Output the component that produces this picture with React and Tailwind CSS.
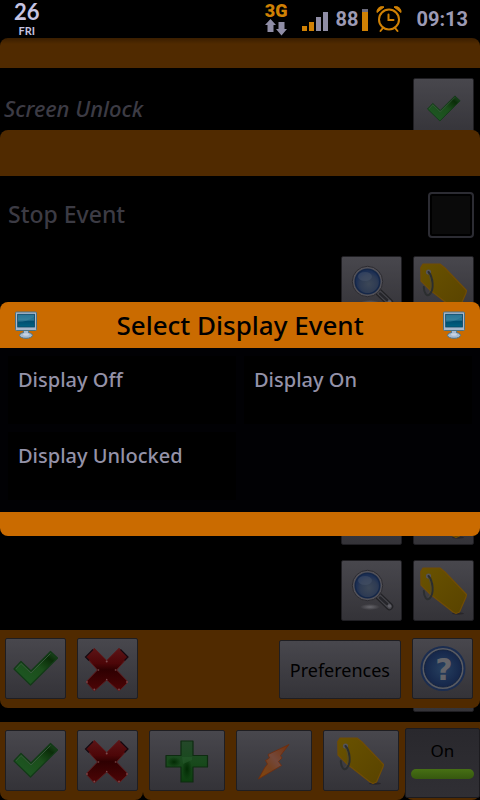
import { useState } from "react";
import clsx from "clsx";

const CheckIcon = ({ className = "size-12" }) => (
  <svg viewBox="0 0 48 48" className={className} aria-hidden="true">
    <defs>
      <linearGradient id="check" x1="0" y1="1" x2="1" y2="0">
        <stop offset="0" stopColor="#1f5a26" />
        <stop offset="0.55" stopColor="#1b4e1b" />
        <stop offset="0.8" stopColor="#0a2d08" />
        <stop offset="1" stopColor="#24502a" />
      </linearGradient>
    </defs>
    <path
      d="M2 24 9 16.5 19 26 38.5 6.5 45.5 13 18.5 40Z"
      fill="url(#check)"
      stroke="#123a17"
      strokeWidth="1.2"
      strokeLinejoin="round"
    />
    <path d="M4 24 9 18.5 19 28 38.5 8.5" fill="none" stroke="#37573b" strokeWidth="1" />
  </svg>
);

const CrossIcon = () => (
  <svg viewBox="0 0 48 48" className="size-12" aria-hidden="true">
    <defs>
      <linearGradient id="cross" x1="0" y1="0" x2="0" y2="1">
        <stop offset="0" stopColor="#5c1416" />
        <stop offset="0.35" stopColor="#4d0608" />
        <stop offset="0.5" stopColor="#2e0001" />
        <stop offset="1" stopColor="#4e0506" />
      </linearGradient>
    </defs>
    <path
      d="M10.3 3.3 2 12 13.5 25 2 37 10.3 46 22.7 35 35 46 44 37 32.5 25 44 12 35 3.3 22.7 15.5Z"
      fill="url(#cross)"
      stroke="#5b191b"
      strokeWidth="1"
      strokeLinejoin="round"
    />
    <path
      d="M9 4.5 1.5 12 5 15.5M36.5 4.5 44 12 40.5 15.5"
      fill="none"
      stroke="#150810"
      strokeWidth="1.2"
    />
    <g fill="#7c4a4d">
      <circle cx="22.7" cy="16.5" r="1" />
      <circle cx="14.5" cy="25" r="0.8" />
      <circle cx="31.5" cy="25" r="0.8" />
      <circle cx="22.7" cy="34.5" r="0.8" />
      <circle cx="10.3" cy="44.5" r="0.9" />
      <circle cx="35" cy="44.5" r="0.9" />
      <circle cx="3" cy="37" r="0.9" />
      <circle cx="43" cy="37" r="0.9" />
    </g>
  </svg>
);

const PlusIcon = () => (
  <svg viewBox="0 0 48 48" className="size-12" aria-hidden="true">
    <defs>
      <linearGradient id="plus" x1="0" y1="0" x2="0" y2="1">
        <stop offset="0" stopColor="#24482a" />
        <stop offset="0.5" stopColor="#194a1d" />
        <stop offset="1" stopColor="#0c3f0e" />
      </linearGradient>
      <radialGradient id="plusShade">
        <stop offset="0" stopColor="#022a03" />
        <stop offset="1" stopColor="#022a03" stopOpacity="0" />
      </radialGradient>
    </defs>
    <path
      d="M18 4H30V18.5H44.5V30H30V45H18V30H3V18.5H18Z"
      fill="url(#plus)"
      stroke="#0e2c11"
      strokeWidth="1.2"
      strokeLinejoin="round"
    />
    <ellipse cx="24" cy="32" rx="5" ry="11" fill="url(#plusShade)" />
    <ellipse cx="11" cy="25" rx="7" ry="5" fill="url(#plusShade)" />
    <path d="M19 20H29V23L20 27Z" fill="#265a2c" opacity="0.6" />
  </svg>
);

const BoltIcon = () => (
  <svg viewBox="0 0 48 48" className="size-12" aria-hidden="true">
    <defs>
      <linearGradient id="bolt" x1="1" y1="0" x2="0" y2="1">
        <stop offset="0" stopColor="#743008" />
        <stop offset="0.45" stopColor="#74483a" />
        <stop offset="0.65" stopColor="#74401f" />
        <stop offset="1" stopColor="#854606" />
      </linearGradient>
    </defs>
    <path
      d="M39 7.5 18 17.5 19.5 21 15.5 23.5 17.5 27 14.5 31 8.5 42 31.5 28.5 28.5 24.5 32 21 30.5 18.5Z"
      fill="url(#bolt)"
      stroke="#6f2c0c"
      strokeWidth="0.8"
      strokeLinejoin="round"
    />
  </svg>
);

const TagIcon = () => (
  <svg viewBox="0 0 48 48" className="size-12" aria-hidden="true">
    <defs>
      <linearGradient id="tag" x1="0" y1="0" x2="1" y2="1">
        <stop offset="0" stopColor="#695200" />
        <stop offset="1" stopColor="#594300" />
      </linearGradient>
    </defs>
    <ellipse cx="38" cy="46.5" rx="6" ry="1.2" fill="#28262a" />
    <path
      d="M0.8 4.5 3 1H20L25 5 46.5 27.5 46 30 39.5 45 36 46.5 33 45 10 27 1 18Z"
      fill="url(#tag)"
      stroke="#704c05"
      strokeWidth="1.2"
      strokeLinejoin="round"
    />
    <circle cx="8.5" cy="9" r="2.6" fill="#555459" />
    <path
      d="M8.5 9C13 14 14.5 27 9.5 31.5C6.5 34 4 29.5 3.8 24"
      fill="none"
      stroke="#2b2e2f"
      strokeWidth="2"
      strokeLinecap="round"
    />
    <path d="M8.5 11C11 16 12.5 26 8.5 30" fill="none" stroke="#4e4a3a" strokeWidth="0.7" />
  </svg>
);

const MagnifierIcon = () => (
  <svg viewBox="0 0 48 48" className="size-12" aria-hidden="true">
    <defs>
      <radialGradient id="lens" cx="0.55" cy="0.6">
        <stop offset="0" stopColor="#3c4757" />
        <stop offset="0.7" stopColor="#2e3b53" />
        <stop offset="1" stopColor="#1c2f54" />
      </radialGradient>
      <radialGradient id="lensShadow">
        <stop offset="0" stopColor="#67666c" />
        <stop offset="1" stopColor="#67666c" stopOpacity="0" />
      </radialGradient>
    </defs>
    <ellipse cx="22" cy="40" rx="10" ry="3" fill="url(#lensShadow)" />
    <path d="M30 28.5 41.5 39.5" stroke="#222226" strokeWidth="7.5" strokeLinecap="round" />
    <path d="M30 28.5 41.5 39.5" stroke="#45454b" strokeWidth="5" strokeLinecap="round" />
    <path d="M32 30.5 39 37" stroke="#26262b" strokeWidth="2.5" strokeLinecap="round" />
    <circle cx="41.5" cy="39" r="1.8" fill="#605f66" />
    <circle cx="19.5" cy="18.5" r="15.2" fill="#525158" stroke="#2c2b30" strokeWidth="1" />
    <circle cx="19.5" cy="18.5" r="12.3" fill="url(#lens)" stroke="#152748" strokeWidth="1.5" />
    <ellipse cx="17" cy="13.5" rx="7" ry="4.5" fill="#47536a" opacity="0.5" />
  </svg>
);

const HelpIcon = () => (
  <svg viewBox="0 0 48 48" className="size-12" aria-hidden="true">
    <defs>
      <radialGradient id="help">
        <stop offset="0" stopColor="#27405f" />
        <stop offset="1" stopColor="#15264a" />
      </radialGradient>
    </defs>
    <circle cx="24" cy="23.5" r="21.5" fill="#595b62" stroke="#1b2d50" strokeWidth="2" />
    <circle cx="24" cy="23.5" r="18.5" fill="url(#help)" stroke="#14233f" strokeWidth="1" />
    <text
      x="25"
      y="35"
      textAnchor="middle"
      fill="#646469"
      className="font-['DejaVu_Sans',sans-serif] text-[30px] font-bold"
    >
      ?
    </text>
  </svg>
);

const MonitorIcon = () => (
  <svg viewBox="0 0 24 28" className="h-7 w-6" aria-hidden="true">
    <defs>
      <linearGradient id="screen" x1="0" y1="0" x2="0" y2="1">
        <stop offset="0" stopColor="#12648a" />
        <stop offset="0.45" stopColor="#2a7795" />
        <stop offset="0.55" stopColor="#004e70" />
        <stop offset="1" stopColor="#006383" />
      </linearGradient>
    </defs>
    <path d="M9.500 19H14.500V23H9.500Z" fill="#a3b5cc" stroke="#4b7387" strokeWidth="0.8" />
    <ellipse cx="12" cy="24.3" rx="6.5" ry="3" fill="#a9bbd0" stroke="#4b7387" strokeWidth="1" />
    <path d="M10 19H14V23.500H10Z" fill="#a9bbd0" />
    <ellipse cx="12" cy="23.5" rx="3" ry="1.3" fill="#c8d3e2" />
    <rect x="1.5" y="1" width="21" height="18.5" rx="1" fill="#a8b7cb" stroke="#4b7387" strokeWidth="1" />
    <rect x="3.7" y="3.3" width="16.8" height="12.7" fill="url(#screen)" stroke="#0c4460" strokeWidth="0.8" />
    <path d="M4 11C10 11 15 9 20 6V3.700H4Z" fill="#4d91a8" opacity="0.35" />
  </svg>
);

const AlarmIcon = () => (
  <svg viewBox="0 0 26 28" className="h-7 w-[26px]" aria-hidden="true">
    <g fill="none" stroke="#d08104" strokeWidth="2" strokeLinecap="round">
      <circle cx="13" cy="14.5" r="10" />
      <path d="M12.500 9.500V15H17.500M6.500 23.500 4.500 26M19.500 23.500 21.500 26" />
    </g>
    <path
      d="M1 7.5C0.5 3.5 4.500 0.500 8 2ZM25 7.500C25.500 3.500 21.500 0.500 18 2Z"
      fill="#d08104"
      stroke="#d08104"
      strokeWidth="1"
      strokeLinejoin="round"
    />
  </svg>
);

const StatusBar = () => (
  <header className="flex h-[38px] items-center justify-between bg-black pr-3 pl-3.5 text-[#9c9ab4]">
    <div className="flex flex-col items-center font-[Lato,sans-serif] font-bold text-[#c6c4e2]">
      <span className="text-[22px] leading-6">26</span>
      <span className="text-[11px] leading-3.5">FRI</span>
    </div>
    <div className="flex items-center font-[Roboto,sans-serif] font-bold">
      <div className="mr-3.5 flex flex-col items-center">
        <span className="text-lg leading-4 font-black text-[#d08104]">3G</span>
        <svg viewBox="0 0 22 17" className="h-[17px] w-[22px]" aria-hidden="true">
          <path
            d="M5.500 0 11 6H8.500V13H2.500V6H0ZM13.500 3H19.500V10H22L16.500 16.500 11 10H13.500Z"
            fill="#8f8da5"
          />
        </svg>
      </div>
      <svg viewBox="0 0 26 20" className="mt-1 mr-2 h-5 w-[26px]" aria-hidden="true">
        <path d="M0 15H5V20H0ZM7 11H12V20H7Z" fill="#d08104" />
        <path d="M14 6H19V20H14ZM21 1H26V20H21Z" fill="#8f8da5" />
      </svg>
      <span className="mr-1 text-xl">88</span>
      <svg viewBox="0 0 6 22" className="mt-0.5 mr-2 h-[22px] w-1.5" aria-hidden="true">
        <path d="M0 0H6V3H0Z" fill="#6c6b7c" />
        <path d="M0 3H6V22H0Z" fill="#d08104" />
      </svg>
      <AlarmIcon />
      <span className="ml-3.5 text-xl">09:13</span>
    </div>
  </header>
);

const IconButton = ({ label, className = "w-[61px]", children, ...rest }) => (
  <button
    type="button"
    aria-label={label}
    className={clsx(
      "flex h-[61px] items-center justify-center rounded-xs border border-[#1f1e22] bg-linear-to-b from-[#48474d] to-[#343338]",
      className
    )}
    {...rest}
  >
    {children}
  </button>
);

// The edit screen behind both dialogs
const ProfileScreen = () => {
  const [enabled, setEnabled] = useState(true);

  return (
    <div className="flex flex-1 flex-col">
      <div className="h-[30px] rounded-t-lg bg-linear-to-b from-[#3a1e00] to-[#502a00] to-20%" />
      <div className="flex flex-1 flex-col justify-between py-2.5 pr-1.5 pl-1">
        <div className="flex items-center justify-between">
          <span className="text-[22px] font-medium text-[#3c3b44] italic">Screen Unlock</span>
          <IconButton label="Confirm screen unlock">
            <CheckIcon className="size-9" />
          </IconButton>
        </div>
        <div className="flex justify-end">
          <IconButton label="Pick tag">
            <TagIcon />
          </IconButton>
        </div>
      </div>
      <footer className="flex">
        <div className="flex h-[78px] gap-[11px] rounded-b-lg bg-[#502a00] px-[5px] pt-2">
          <IconButton label="Save">
            <CheckIcon />
          </IconButton>
          <IconButton label="Cancel">
            <CrossIcon />
          </IconButton>
        </div>
        <div className="flex h-[78px] flex-1 gap-[11px] rounded-b-lg bg-[#502a00] px-1.5 pt-2">
          <IconButton label="Add" className="flex-1">
            <PlusIcon />
          </IconButton>
          <IconButton label="Action" className="flex-1">
            <BoltIcon />
          </IconButton>
          <IconButton label="Tags" className="flex-1">
            <TagIcon />
          </IconButton>
        </div>
        <div className="h-[78px] w-[75px] rounded-b-lg bg-[#502a00] pt-1.5">
          <button
            type="button"
            aria-pressed={enabled}
            onClick={() => setEnabled(!enabled)}
            className="flex h-[70px] w-full flex-col items-center gap-1.5 rounded-xs border border-[#1c1b1f] bg-linear-to-b from-[#29282d] to-[#302f34] pt-2.5 text-[17px] leading-6 text-black"
          >
            {enabled ? "On" : "Off"}
            <span
              className={clsx(
                "h-2.5 w-[63px] rounded-full",
                enabled ? "bg-linear-to-b from-[#477014] to-[#36580f]" : "bg-[#1d1c20]"
              )}
            />
          </button>
        </div>
      </footer>
    </div>
  );
};

const rows = [1, 2, 3, 4, 5];

const EventDialog = () => {
  const [stopEvent, setStopEvent] = useState(false);

  return (
    <section className="absolute inset-0 flex flex-col justify-center">
      <div className="h-[46px] rounded-t-lg bg-[#502a00]" />
      <div className="flex flex-col gap-[15px] bg-black pt-4 pr-1.5 pb-[9px] pl-2">
        <div className="flex items-start justify-between">
          <label htmlFor="stopEvent" className="text-[23px] leading-11 font-medium text-[#3c3b44]">
            Stop Event
          </label>
          <input
            type="checkbox"
            id="stopEvent"
            className="mb-[3px] size-[46px] appearance-none rounded-sm border-2 border-[#2c2c33] bg-[#0a0a0a] shadow-[inset_0_0_0_2px_black] checked:bg-[#1b4e1b]"
            checked={stopEvent}
            onChange={() => setStopEvent(!stopEvent)}
          />
        </div>
        {rows.map((row) => (
          <div key={row} className="flex justify-end gap-[11px]">
            <IconButton label="Search">
              <MagnifierIcon />
            </IconButton>
            <IconButton label="Pick tag">
              <TagIcon />
            </IconButton>
          </div>
        ))}
      </div>
      <div className="flex h-[78px] items-end gap-[11px] rounded-b-lg bg-[#502a00] pr-[7px] pb-[9px] pl-[5px]">
        <IconButton label="Accept">
          <CheckIcon />
        </IconButton>
        <IconButton label="Cancel">
          <CrossIcon />
        </IconButton>
        <button
          type="button"
          className="ml-auto h-[59px] rounded-xs border border-[#1f1e22] bg-linear-to-b from-[#48474d] to-[#343338] px-2.5 text-lg text-black"
        >
          Preferences
        </button>
        <IconButton label="Help">
          <HelpIcon />
        </IconButton>
      </div>
    </section>
  );
};

const SelectDialog = () => (
  <section
    className="absolute inset-0 flex flex-col justify-center"
    role="dialog"
    aria-labelledby="selectTitle"
  >
    <div className="flex h-[46px] items-center justify-between rounded-t-lg bg-[#ca6b00] px-3.5">
      <MonitorIcon />
      <h1 id="selectTitle" className="text-[26px] leading-8 font-medium text-black">
        Select Display Event
      </h1>
      <MonitorIcon />
    </div>
    <div className="grid grid-cols-2 gap-2 bg-[#010104] px-2 pt-2 pb-3 text-xl font-medium text-[#9492a8]">
      {["Display Off", "Display On", "Display Unlocked"].map((name) => (
        <button
          key={name}
          type="button"
          className="flex h-[68px] items-start bg-black px-2.5 pt-2.5 text-left"
        >
          {name}
        </button>
      ))}
    </div>
    <div className="h-6 rounded-b-lg bg-[#ca6b00]" />
  </section>
);

const App = () => {
  return (
    <div className="flex min-h-screen flex-col bg-black font-['Noto_Sans',sans-serif]">
      <StatusBar />
      <main className="relative flex flex-1 flex-col">
        <ProfileScreen />
        <EventDialog />
        <SelectDialog />
      </main>
    </div>
  );
};

export default App;
